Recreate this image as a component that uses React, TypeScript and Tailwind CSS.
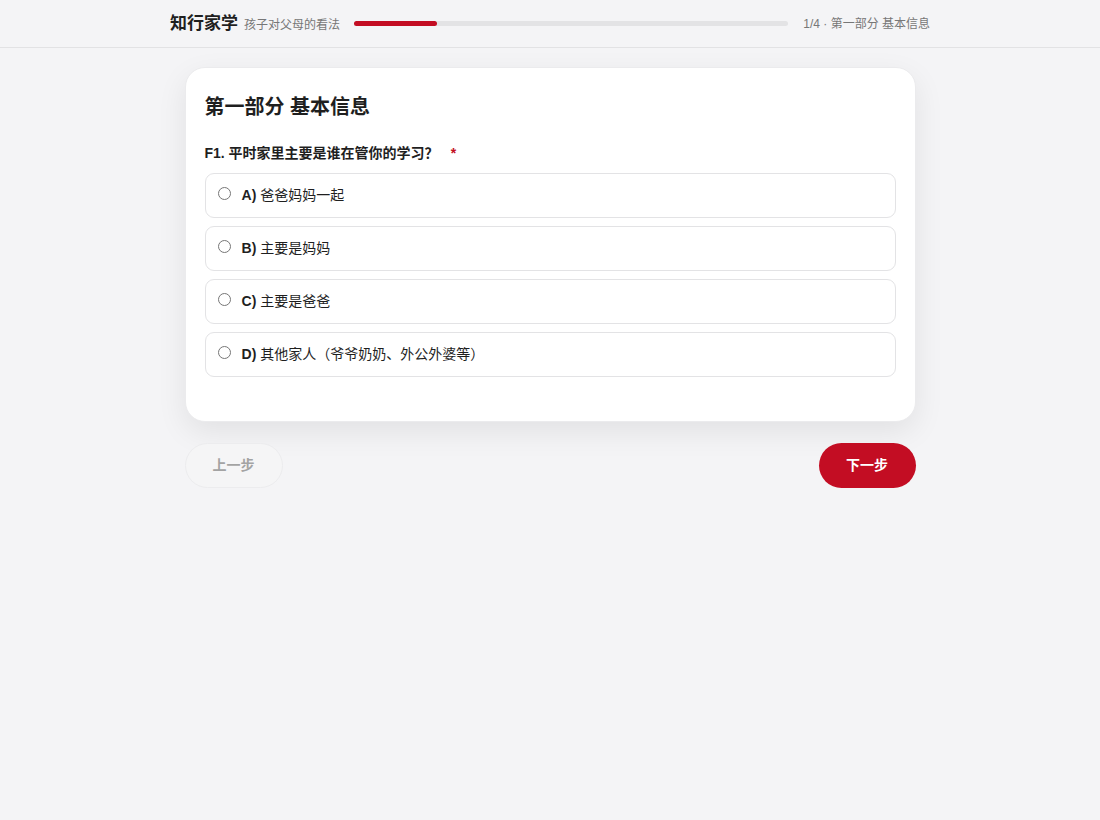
import { useState } from "react";

const options = [
  { key: "A", label: "爸爸妈妈一起" },
  { key: "B", label: "主要是妈妈" },
  { key: "C", label: "主要是爸爸" },
  { key: "D", label: "其他家人（爷爷奶奶、外公外婆等）" },
];

export default function App() {
  const [picked, setPicked] = useState<string | null>(null);

  return (
    <div
      className="min-h-screen w-full bg-[#f4f4f6] text-[#1f1f1f]"
      style={{ fontFamily: '"Liberation Sans", "Noto Sans CJK SC", sans-serif' }}
    >
      {/* Top bar */}
      <header className="border-b border-[#e2e2e4] bg-[#f4f4f6]">
        <div className="mx-auto flex h-[47px] w-[760px] items-center">
          <span className="text-[17px] font-bold leading-none text-[#1f1f1f]">知行家学</span>
          <span className="ml-[6px] mt-[3px] text-[12px] leading-none text-[#777]">孩子对父母的看法</span>
          <div className="ml-[14px] h-[5px] flex-1 rounded-full bg-[#e3e3e5]">
            <div className="h-full w-[19%] rounded-full bg-[#c30d23]" />
          </div>
          <span className="ml-[15px] text-[12px] leading-none text-[#777]">1/4 · 第一部分 基本信息</span>
        </div>
      </header>

      <main className="mx-auto w-[731px] pt-[19px]">
        <section className="rounded-[20px] border border-[#ebebed] bg-white px-[19px] pt-[24px] pb-[44px] shadow-[0_10px_30px_rgba(0,0,0,0.08)]">
          <h2 className="text-[20px] font-bold leading-[30px]">第一部分 基本信息</h2>

          <div className="mt-[21px] flex items-center text-[14px] font-bold leading-[20px]">
            <span>F1. 平时家里主要是谁在管你的学习？</span>
            <span className="ml-[12px] text-[#c30d23]">*</span>
          </div>

          <div className="mt-[10px] flex flex-col gap-[8px]">
            {options.map((o) => (
              <label
                key={o.key}
                className="flex h-[45px] cursor-pointer items-center rounded-[9px] border border-[#e3e3e5] bg-white px-[12px] text-[14px]"
              >
                <input
                  type="radio"
                  name="f1"
                  checked={picked === o.key}
                  onChange={() => setPicked(o.key)}
                  className="m-0 mb-[4px] h-[13px] w-[13px]"
                />
                <span className="ml-[11px] font-bold">{o.key})</span>
                <span className="ml-[4px]">{o.label}</span>
              </label>
            ))}
          </div>
        </section>

        <div className="mt-[21px] flex items-center justify-between">
          <button className="h-[45px] w-[98px] rounded-full border border-[#ececee] bg-[#f5f5f6] text-[14px] font-bold text-[#a3a3a3]">
            上一步
          </button>
          <button className="h-[45px] w-[97px] rounded-full bg-[#c30d23] text-[14px] font-bold text-white">
            下一步
          </button>
        </div>
      </main>
    </div>
  );
}
